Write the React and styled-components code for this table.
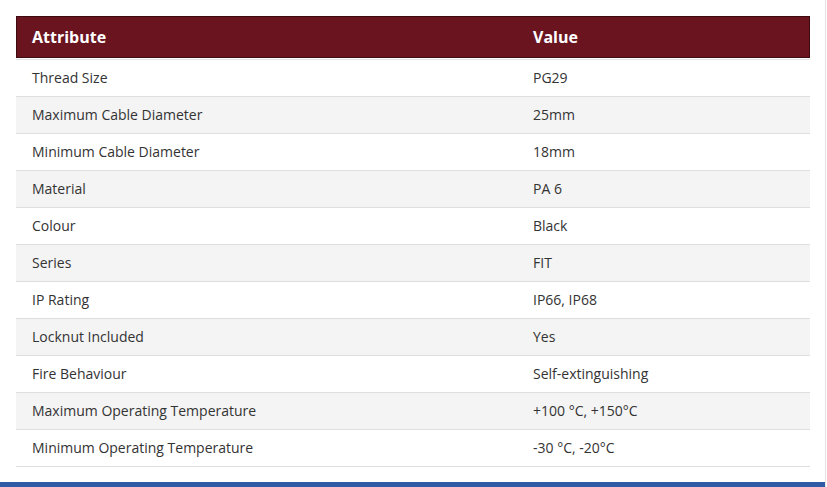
import React from "react";
import styled, { createGlobalStyle } from "styled-components";

const Global = createGlobalStyle`
  html, body { margin: 0; padding: 0; background: #fff; }
  body { font-family: "Open Sans", "Noto Sans", Arial, sans-serif; }
`;

const Page = styled.div`
  width: 826px;
  height: 487px;
  box-sizing: border-box;
  border-right: 1px solid #e6e6e6;
  display: flex;
  flex-direction: column;
  overflow: hidden;
`;

const Content = styled.div`
  padding: 16px 15px 0 16px;
`;

const Table = styled.div`
  width: 794px;
  display: flex;
  flex-direction: column;
`;

const HeaderRow = styled.div`
  display: grid;
  grid-template-columns: 501px 1fr;
  height: 42px;
  box-sizing: border-box;
  background: #6a1420;
  border: 1px solid #3e0a11;
  align-items: center;
  margin-bottom: 1px;
`;

const HeaderCell = styled.div`
  color: #fff;
  font-weight: 700;
  font-size: 16px;
  padding-left: 15px;
`;

const Body = styled.div`
  border-top: 1px solid #e2e2e2;
`;

const Row = styled.div`
  display: grid;
  grid-template-columns: 501px 1fr;
  height: 37px;
  box-sizing: border-box;
  align-items: center;
  background: ${(p) => (p.$alt ? "#f4f4f4" : "#fff")};
  border-bottom: 1px solid #dedede;
`;

const Cell = styled.div`
  color: #333;
  font-size: 14px;
  padding-left: 16px;
  padding-bottom: 2px;
`;

const Footer = styled.div`
  margin-top: auto;
  height: 5px;
  background: #2f5aa5;
`;

const rows = [
  ["Thread Size", "PG29"],
  ["Maximum Cable Diameter", "25mm"],
  ["Minimum Cable Diameter", "18mm"],
  ["Material", "PA 6"],
  ["Colour", "Black"],
  ["Series", "FIT"],
  ["IP Rating", "IP66, IP68"],
  ["Locknut Included", "Yes"],
  ["Fire Behaviour", "Self-extinguishing"],
  ["Maximum Operating Temperature", "+100 °C, +150°C"],
  ["Minimum Operating Temperature", "-30 °C, -20°C"],
];

export default function App() {
  return (
    <>
      <Global />
      <Page>
        <Content>
          <Table>
            <HeaderRow>
              <HeaderCell>Attribute</HeaderCell>
              <HeaderCell>Value</HeaderCell>
            </HeaderRow>
            <Body>
              {rows.map(([a, v], i) => (
                <Row key={a} $alt={i % 2 === 1}>
                  <Cell>{a}</Cell>
                  <Cell>{v}</Cell>
                </Row>
              ))}
            </Body>
          </Table>
        </Content>
        <Footer />
      </Page>
    </>
  );
}
